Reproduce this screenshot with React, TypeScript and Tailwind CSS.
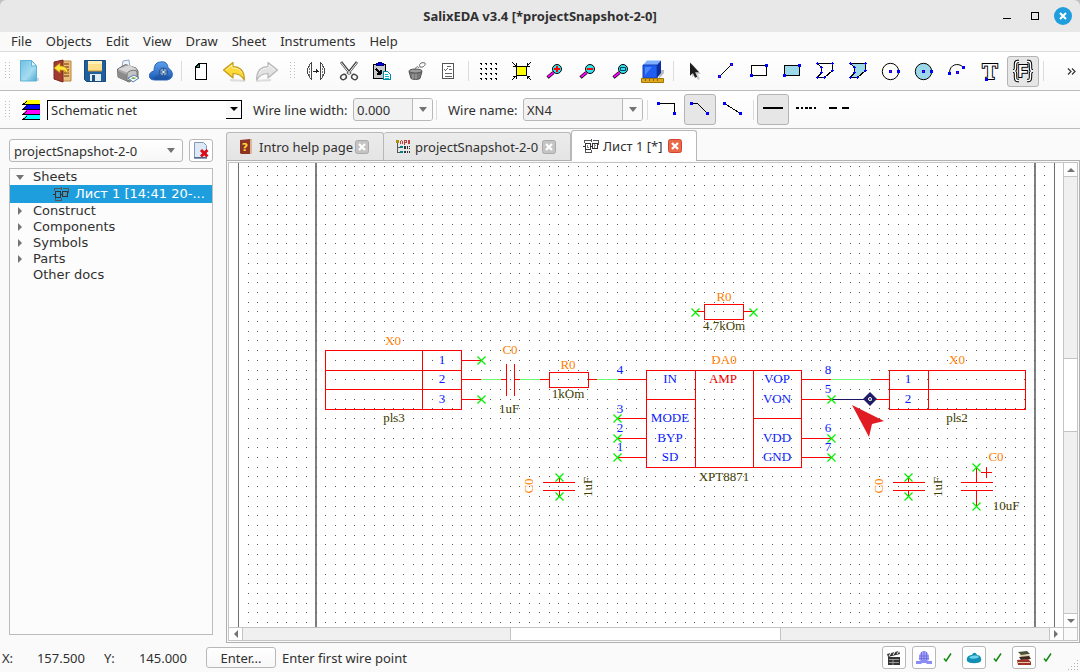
import { useState, type ReactNode } from "react";

const MENU = ["File", "Objects", "Edit", "View", "Draw", "Sheet", "Instruments", "Help"];

const RED = "#ff0000";
const GREEN = "#00f000";
const WIRE = "#6cff6c";
const ORANGE = "#ff8000";
const BLUE = "#0a1cff";
const OLIVE = "#404000";

/* ---------- icon helpers ---------- */

function Icon({ children, crisp }: { children: ReactNode; crisp?: boolean }) {
  return (
    <svg width="24" height="25" viewBox="0 0 24 25" fill="none" shapeRendering={crisp ? "crispEdges" : "auto"} aria-hidden="true">
      {children}
    </svg>
  );
}

function Node({ x, y, red }: { x: number; y: number; red?: boolean }) {
  return (
    <g>
      <rect x={x - 1.5} y={y - 1.5} width="3" height="3" fill="#0000ff" />
      {red && <rect x={x - 0.5} y={y - 0.5} width="1" height="1" fill="#ff0000" />}
    </g>
  );
}

/* ---------- file icons ---------- */

const NewIcon = () => (
  <Icon>
    <defs>
      <linearGradient id="new" x1="0" y1="0" x2="1" y2="1">
        <stop offset="0" stopColor="#6fc0e2" />
        <stop offset="0.6" stopColor="#a5dcf0" />
        <stop offset="1" stopColor="#4fa9d2" />
      </linearGradient>
    </defs>
    <path d="M8 22h14v-3l-4-1z" fill="#bbb" opacity="0.6" />
    <path d="M3.500 1.500h11l5 5.500v15h-16z" fill="url(#new)" stroke="#5fb3d8" />
    <path d="M14.500 1.500v5.500h5z" fill="#e4f6fc" stroke="#5fb3d8" />
  </Icon>
);

const ExitIcon = () => (
  <Icon>
    <path d="M9 2h12v20H9z" fill="#e8c07a" stroke="#b98440" />
    <path d="M14 5h5M14 8h5M14 11h5M14 14h5M14 17h5" stroke="#9b5a2b" strokeWidth="1.500" />
    <path d="M4 3l9-2v22l-9-3z" fill="#a33a30" stroke="#7b2a22" />
    <path d="M4 9l6-5v3c5 0 8 2 8 8-2-3-4-4-8-4v3z" fill="#ffe43c" stroke="#b58a10" strokeWidth="0.800" />
  </Icon>
);

const SaveIcon = () => (
  <Icon>
    <path d="M1.500 1.500h21v21h-19l-2-2z" fill="#1f5f9e" stroke="#174a7c" />
    <path d="M5 2h14v10H5z" fill="#ffe08a" />
    <path d="M5 2h14v3H5z" fill="#fff1b8" />
    <path d="M5 12h14" stroke="#c98b2a" />
    <path d="M7 15h11v7H7z" fill="#e4ecf2" />
    <path d="M9 16h3v6H9z" fill="#1f4f80" />
  </Icon>
);

const PrintIcon = () => (
  <Icon>
    <path d="M6 8l1-6 6-1 1 8z" fill="#eef4fb" stroke="#8fa9c8" />
    <path d="M1.500 10l8-4.500L20 9l2 3v6l-9 5-11-5z" fill="#a9a9a9" stroke="#6b6b6b" />
    <path d="M2 10l10 4 9-4-8-4z" fill="#d6d6d6" />
    <path d="M2 12l9 4v6l-9-4z" fill="#8b8b8b" />
    <path d="M11 15c1-4 9-5 10-2v6l-10 3z" fill="#c4c4c4" stroke="#777" />
    <path d="M12 19l6-3 5 3-6 4z" fill="#f2f6ff" stroke="#5c7fae" />
    <path d="M15 20l2-2 3 2z" fill="#58b947" />
    <path d="M17 18l2 0 1 1z" fill="#f0b030" />
  </Icon>
);

const CloudIcon = () => (
  <Icon>
    <defs>
      <linearGradient id="cloud" x1="0" y1="0" x2="0" y2="1">
        <stop offset="0" stopColor="#5da0ee" />
        <stop offset="1" stopColor="#1a59b4" />
      </linearGradient>
    </defs>
    <path d="M6 21c-8 0-7-8-1-9 0-7 3-9 7-9 4-1 7 2 7 6 6 3 6 11-1 12z" fill="url(#cloud)" stroke="#2b65b8" />
    <path d="M4 19l8-5 9 4-3 3H6z" fill="#1b4b94" opacity="0.500" />
    <circle cx="14.500" cy="13" r="4" fill="#7f9fc6" stroke="#2a5798" strokeWidth="1.200" />
    <path d="M14.500 9v8M10.500 13h8" stroke="#2a5798" />
    <circle cx="14.500" cy="13" r="1.200" fill="#dfe9f5" />
  </Icon>
);

const PageIcon = () => (
  <Icon crisp>
    <path d="M9.500 4.500h8v16h-11v-13z" fill="#fff" stroke="#000" />
    <path d="M10 5v3H7z" fill="#00a090" stroke="#000" />
  </Icon>
);

const UndoArrow = ({ fill, stroke }: { fill: string; stroke: string }) => (
  <>
    <path d="M8 21c6 1 12 0 15 1" stroke="#ddd" strokeWidth="2" />
    <path d="M1.500 11L11 3.500v4.200c8 .3 11.500 5 11.300 13.300C19.500 16 16.500 14.500 11 14.500V19z" fill={fill} stroke={stroke} strokeWidth="1.200" strokeLinejoin="round" />
    <path d="M4 11l6-5v3c5 0 8 1 10 5" stroke="#fff" opacity="0.600" />
  </>
);

const UndoIcon = () => <Icon><UndoArrow fill="#ffd935" stroke="#c29a16" /></Icon>;
const RedoIcon = () => (
  <Icon>
    <g transform="matrix(-1 0 0 1 24 0)">
      <UndoArrow fill="#e2e2e2" stroke="#b5b5b5" />
    </g>
  </Icon>
);

/* ---------- edit icons ---------- */

const MirrorIcon = () => (
  <Icon crisp>
    <path d="M7.500 3.500v17c-3-3-4-5-4-8.500s1-5.500 4-8.500zM16.500 3.500v17c3-3 4-5 4-8.500s-1-5.500-4-8.500z" stroke="#444" />
    <path d="M5.500 6v13M18.500 6v13" stroke="#777" strokeDasharray="2 1" />
    <path d="M9 12h6M12.500 10v4M13.500 11v2" stroke="#222" />
  </Icon>
);

const CutIcon = () => (
  <Icon>
    <path d="M4 3l9.500 12M20 3l-9.500 12" stroke="#444" strokeWidth="2.800" />
    <path d="M4 3.500l9.500 12M20 3.500l-9.500 12" stroke="#f4f4f4" strokeWidth="1" />
    <ellipse cx="6.500" cy="18" rx="3" ry="2.500" transform="rotate(-35 6.500 18)" stroke="#444" strokeWidth="1.400" />
    <ellipse cx="17.500" cy="18" rx="3" ry="2.500" transform="rotate(35 17.500 18)" stroke="#444" strokeWidth="1.400" />
  </Icon>
);

const PasteIcon = () => (
  <Icon crisp>
    <path d="M3.500 5.500h12v14h-12z" fill="#c9c9c9" stroke="#000" />
    <path d="M6.500 6.500v-2h2v-1h3v1h2v2z" fill="#0000e0" stroke="#000080" />
    <path d="M6 10l4 4M10.500 10.500v4M7 14.500h4" stroke="#000" strokeWidth="2" />
    <path d="M13.500 12.500h4l3 3v5h-7z" fill="#fff" stroke="#008c9c" />
    <path d="M15 15.500h3M15 17.500h4M15 19.500h4" stroke="#00b8d0" />
  </Icon>
);

const BucketIcon = () => (
  <Icon>
    <path d="M6 12.500h13l-2 7c-2 1.300-7 1.300-9 0z" fill="#777" stroke="#555" />
    <ellipse cx="12.500" cy="12" rx="6.500" ry="2" fill="#9d9d9d" stroke="#555" />
    <path d="M12 11c1-4 3-4 4-2M17 8c-2-4 3-5 5-4 1 2-2 5-5 4z" stroke="#666" />
    <path d="M10 15v5M13 15v5" stroke="#aaa" />
  </Icon>
);

const ChecklistIcon = () => (
  <Icon crisp>
    <path d="M6.500 4.500h11v15h-11z" fill="#fff" stroke="#555" />
    <path d="M11 7.500h4M13 10.500h3M9 14.500h7M9 17.500h7M8 10.500h1M9 11.500h1M10 10.500h1M11 9.500h1" stroke="#666" />
  </Icon>
);

/* ---------- view icons ---------- */

const GridIcon = () => (
  <Icon crisp>
    {[4, 9, 14, 19].flatMap((y) =>
      [4, 9, 14, 19].map((x) => <path key={`${x}-${y}`} d={`M${x} ${y}h2v2h-1v-1h-1z`} fill="#000" />)
    )}
  </Icon>
);

const FitIcon = () => (
  <Icon crisp>
    <path d="M7.500 7.500h10v9h-10z" fill="#ffff00" stroke="#000" />
    <path d="M3 3l4 4M22 3l-4 4M3 21l4-4M22 21l-4-4M7 4v3H4M18 4v3h3M7 20v-3H4M18 20v-3h3" stroke="#000" />
  </Icon>
);

function ZoomIcon({ kind }: { kind: "in" | "out" | "fit" }) {
  return (
    <Icon>
      <path d="M11.500 13.500L5.500 18.500" stroke="#000" strokeWidth="3.400" />
      <path d="M11.500 13.500L6 18" stroke="#ff00ff" strokeWidth="2" />
      <circle cx="15" cy="10" r="4.500" fill="#2fe4ee" stroke="#000" />
      {kind === "fit" ? (
        <path d="M12.500 8.500h5v3h-5z" stroke="#004060" />
      ) : (
        <path d={kind === "in" ? "M12 10h6M15 7v6" : "M12 10h6"} stroke="#f00" strokeWidth="2" />
      )}
    </Icon>
  );
}

const CubeIcon = () => (
  <Icon>
    <path d="M18 20l5-6v-3h-4z" fill="#bbb" />
    <path d="M2 6l4-4.500h14l-3 4.500z" fill="#7fb0ff" />
    <path d="M2 6h14v13H2z" fill="#1f5cf0" stroke="#153fb5" />
    <path d="M16 6l4-4.500V14l-4 5z" fill="#0b2f9e" />
    <path d="M4 8h7l-7 8z" fill="#5f96ff" opacity="0.700" />
    <path d="M.500 19.500h22v4H.500z" fill="#e0a91c" stroke="#a3760a" />
    <path d="M4.500 20v2M8.500 20v2M12.500 20v2M16.500 20v2" stroke="#8a6200" />
  </Icon>
);

/* ---------- draw icons ---------- */

const PointerIcon = () => (
  <Icon>
    <path d="M11 5v13l3-2 3 5 2-1-2.500-5H20z" fill="#999" opacity="0.500" />
    <path d="M9 3.500v13.200l2.900-2.600 2.100 4.700 2.200-1-2.100-4.500h4z" fill="#1c1c1c" />
  </Icon>
);

const LineIcon = () => (
  <Icon crisp>
    <path d="M5.500 17.500l12-12" stroke="#000" />
    <Node x={5.5} y={17.5} red />
    <Node x={17.5} y={5.5} red />
  </Icon>
);

const RectIcon = ({ filled }: { filled?: boolean }) => (
  <Icon crisp>
    <path d="M4.500 6.500h15v10h-15z" fill={filled ? "#9bd9ea" : "#fff"} stroke="#000" />
    <Node x={19.5} y={6.5} />
    <Node x={4.5} y={16.5} />
  </Icon>
);

const POLY = [[4.5, 4.5], [19.5, 4.5], [19.5, 11.5], [11.5, 18.5], [4.5, 18.5], [8.5, 13.5], [8.5, 8.5]];

const PolyIcon = ({ filled }: { filled?: boolean }) => (
  <Icon crisp>
    <polygon points={POLY.join(" ")} fill={filled ? "#9bd9ea" : "#fff"} stroke="#000" />
    {POLY.map(([x, y]) => (
      <path key={`${x}-${y}`} d={`M${x - 1.5} ${y}h3M${x} ${y - 1.5}v3`} stroke="#0000ff" />
    ))}
  </Icon>
);

const CircleIcon = ({ filled }: { filled?: boolean }) => (
  <Icon>
    <circle cx="11.500" cy="12.500" r="8.200" fill={filled ? "#9bd9ea" : "#fff"} stroke="#000" />
    <Node x={11.5} y={12.5} red />
    <Node x={19.5} y={12.5} />
  </Icon>
);

const ArcIcon = () => (
  <Icon>
    <path d="M4.500 14c0-9 9-10.500 13.500-6" stroke="#000" />
    <Node x={4.5} y={14.5} />
    <Node x={12.5} y={13.5} red />
    <Node x={18.5} y={8.5} />
  </Icon>
);

const TextIcon = () => (
  <Icon>
    <text x="12" y="20" textAnchor="middle" fontFamily="DejaVu Serif" fontWeight="700" fontSize="20" fill="#fff" stroke="#000" strokeWidth="2" paintOrder="stroke">T</text>
    <Node x={8.5} y={20.5} />
  </Icon>
);

const BRACES = "M8 2.500H6.500C4.500 2.500 4.500 4 4.500 6v3c0 2-1 3-2.500 3 1.500 0 2.500 1 2.500 3v3c0 2 0 3.500 2 3.500H8M16 2.500h1.500c2 0 2 1.500 2 3.500v3c0 2 1 3 2.500 3-1.500 0-2.500 1-2.500 3v3c0 2 0 3.500-2 3.500H16";

const FieldIcon = () => (
  <Icon>
    <path d={BRACES} stroke="#000" strokeWidth="3.400" />
    <path d={BRACES} stroke="#fff" strokeWidth="1.400" />
    <text x="12" y="18" textAnchor="middle" fontFamily="Liberation Sans" fontWeight="700" fontSize="16" fill="#fff" stroke="#000" strokeWidth="2" paintOrder="stroke">F</text>
  </Icon>
);

/* ---------- wire icons ---------- */

const WireIcon = ({ d }: { d: string }) => (
  <Icon crisp>
    <path d={d} stroke="#000" />
    <Node x={3.5} y={6.5} />
    <Node x={19.5} y={16.5} />
  </Icon>
);

const StrokeIcon = ({ d }: { d: string }) => (
  <Icon crisp>
    <path d={d} stroke="#000" strokeWidth="2" />
  </Icon>
);

const LayersIcon = () => (
  <svg width="18" height="20" viewBox="0 0 18 20" shapeRendering="crispEdges" aria-hidden="true">
    {["#ffff00", "#0000ff", "#ff00ff", "#00ffff"].map((fill, i) => (
      <g key={fill} transform={`translate(0 ${i * 5})`}>
        <path d="M4 0h14v4H0z" fill={fill} />
        <path d="M0 4.500h18M1 3.500h2M3 2.500h1M4 1.500h1" stroke="#000" />
      </g>
    ))}
  </svg>
);

const SchemeIcon = () => (
  <svg width="16" height="14" viewBox="0 0 16 14" fill="none" stroke="#333" shapeRendering="crispEdges" aria-hidden="true">
    <path d="M2.500 4.500h5v6h-5zM9.500 4.500h5v5h-5zM0 7.500h2M8 7.500h1" />
    <path d="M1.500 4V1.500h7M8.500 0v3M9.500 1.500h6V6M2.500 11v2h6v-2" stroke="#555" />
    <path d="M4.500 6v3M5.500 8v1M11.500 5v4M12.500 6v1" stroke="#888" />
  </svg>
);

const ProjectIcon = () => (
  <svg width="15" height="15" viewBox="0 0 15 15" fill="none" shapeRendering="crispEdges" aria-hidden="true">
    <path d="M2.500 3v10.500h3M2.500 8.500h3" stroke="#555" />
    <path d="M1 1h3v3H1z" fill="#a89000" />
    <path d="M5 7h3v2H5zM5 12h3v2H5z" fill="#008080" />
    <path d="M5.500 5V2M6 1.500h1M7.500 2v3M9.500 6V1.500h2v2h-2M13.500 1.500h1v3h-1z" stroke="#c04040" />
    <path d="M9.500 7.500h1v2h-1zM12.500 7v3M14.500 7v1M14.500 9v1M9.500 14v-2h1v2M12.500 14v-2M14.500 12v2" stroke="#333" />
  </svg>
);

const HelpBookIcon = () => (
  <svg width="13" height="16" viewBox="0 0 13 16" aria-hidden="true">
    <path d="M1 1l10-1 2 1v14H2l-1-1z" fill="#8d3424" />
    <path d="M11 0l2 1v14h-2z" fill="#d9b89c" />
    <text x="6" y="12" textAnchor="middle" fontFamily="DejaVu Sans" fontWeight="700" fontSize="11" fill="#ffd93b">?</text>
  </svg>
);

const DeleteDocIcon = () => (
  <svg width="17" height="17" viewBox="0 0 17 17" aria-hidden="true">
    <path d="M1.500.500h9l3 3v12h-12z" fill="#dde9f7" stroke="#8099bb" />
    <path d="M1 16h13" stroke="#1c3a63" />
    <path d="M8 8l6.500 6.500M14.500 8L8 14.500" stroke="#d80f1a" strokeWidth="3" />
  </svg>
);

/* ---------- controls ---------- */

function ToolButton({ label, active, children }: { label: string; active?: boolean; children: ReactNode }) {
  return (
    <button
      type="button"
      aria-label={label}
      aria-pressed={active}
      className={`mr-px flex h-[31px] w-8 shrink-0 items-center justify-center rounded-[3px] border ${
        active ? "border-[#b4b4b4] bg-[#e6e6e6]" : "border-transparent"
      }`}
    >
      {children}
    </button>
  );
}

const Separator = () => (
  <div className="flex w-[7px] shrink-0 justify-center">
    <div className="h-5 w-px bg-[#dcdcdc]" />
  </div>
);

const Handle = () => (
  <svg width="5" height="18" className="shrink-0" shapeRendering="crispEdges" aria-hidden="true">
    <path d="M.5 0v18M4.500 0v18" stroke="#bdbdbd" strokeDasharray="1 2" />
  </svg>
);

const Triangle = () => (
  <svg width="8" height="5" viewBox="0 0 8 5" aria-hidden="true">
    <path d="M0 0h8L4 5z" fill="#747474" />
  </svg>
);

function EditCombo({ id, value, className }: { id: string; value: string; className: string }) {
  return (
    <div className={`flex h-[23px] shrink-0 overflow-hidden rounded-[3px] border border-[#b8b8b8] bg-[#f2f2f2] ${className}`}>
      <input id={id} defaultValue={value} className="min-w-0 flex-1 bg-transparent pl-[3px] outline-none" />
      <button type="button" aria-label="Show values" className="flex w-5 items-center justify-center border-l border-[#b8b8b8] bg-[#fafafa]">
        <Triangle />
      </button>
    </div>
  );
}

function MainToolbar() {
  return (
    <div className="flex h-[39px] items-center overflow-hidden border-b border-[#bcbcbc] bg-linear-to-b from-white to-[#f9f9f9] pl-[5px]">
      <Handle />
      <div className="ml-[3px] flex items-center">
        <ToolButton label="New"><NewIcon /></ToolButton>
        <ToolButton label="Close project"><ExitIcon /></ToolButton>
        <ToolButton label="Save"><SaveIcon /></ToolButton>
        <ToolButton label="Print"><PrintIcon /></ToolButton>
        <ToolButton label="Cloud"><CloudIcon /></ToolButton>
        <Separator />
        <ToolButton label="New sheet"><PageIcon /></ToolButton>
        <ToolButton label="Undo"><UndoIcon /></ToolButton>
        <ToolButton label="Redo"><RedoIcon /></ToolButton>
      </div>
      <div className="flex w-4 shrink-0 justify-center"><Handle /></div>
      <ToolButton label="Mirror"><MirrorIcon /></ToolButton>
      <ToolButton label="Cut"><CutIcon /></ToolButton>
      <ToolButton label="Paste"><PasteIcon /></ToolButton>
      <ToolButton label="Brush"><BucketIcon /></ToolButton>
      <ToolButton label="Properties"><ChecklistIcon /></ToolButton>
      <Separator />
      <ToolButton label="Grid"><GridIcon /></ToolButton>
      <ToolButton label="Fit page"><FitIcon /></ToolButton>
      <ToolButton label="Zoom in"><ZoomIcon kind="in" /></ToolButton>
      <ToolButton label="Zoom out"><ZoomIcon kind="out" /></ToolButton>
      <ToolButton label="Zoom window"><ZoomIcon kind="fit" /></ToolButton>
      <ToolButton label="3D view"><CubeIcon /></ToolButton>
      <Separator />
      <ToolButton label="Select"><PointerIcon /></ToolButton>
      <ToolButton label="Line"><LineIcon /></ToolButton>
      <ToolButton label="Rectangle"><RectIcon /></ToolButton>
      <ToolButton label="Filled rectangle"><RectIcon filled /></ToolButton>
      <ToolButton label="Region"><PolyIcon /></ToolButton>
      <ToolButton label="Filled region"><PolyIcon filled /></ToolButton>
      <ToolButton label="Circle"><CircleIcon /></ToolButton>
      <ToolButton label="Filled circle"><CircleIcon filled /></ToolButton>
      <ToolButton label="Arc"><ArcIcon /></ToolButton>
      <ToolButton label="Text"><TextIcon /></ToolButton>
      <ToolButton label="Field" active><FieldIcon /></ToolButton>
      <Separator />
      <button type="button" aria-label="More tools" className="ml-auto pr-1">
        <svg width="9" height="7" viewBox="0 0 9 7" fill="none" stroke="#333" strokeWidth="1.200" aria-hidden="true">
          <path d="M1 .500l3 3-3 3M5 .500l3 3-3 3" />
        </svg>
      </button>
    </div>
  );
}

function WireToolbar() {
  return (
    <div className="flex h-[38px] items-center overflow-hidden border-b border-[#bcbcbc] bg-linear-to-b from-white to-[#f9f9f9] pl-[5px]">
      <Handle />
      <div className="ml-3 w-[25px] shrink-0"><LayersIcon /></div>
      <div className="relative h-5 w-[195px] shrink-0 border-t border-l border-black bg-white">
        <select aria-label="Layer" className="h-full w-full appearance-none bg-transparent pl-[3px] outline-none">
          <option>Schematic net</option>
        </select>
        <span className="pointer-events-none absolute top-0 right-0 flex h-[18px] w-4 items-center justify-center border-r border-b border-black bg-[#fafafa]">
          <svg width="8" height="4" viewBox="0 0 8 4" aria-hidden="true"><path d="M0 0h8L4 4z" fill="#000" /></svg>
        </span>
      </div>
      <label htmlFor="wire-width" className="ml-[11px] w-[100px] shrink-0 whitespace-nowrap">Wire line width:</label>
      <EditCombo id="wire-width" value="0.000" className="w-20" />
      <Separator />
      <label htmlFor="wire-name" className="ml-2 w-[75px] shrink-0 whitespace-nowrap">Wire name:</label>
      <EditCombo id="wire-name" value="XN4" className="w-[120px]" />
      <div className="w-px shrink-0" />
      <Separator />
      <ToolButton label="Orthogonal wire"><WireIcon d="M3.500 6.500h16v10" /></ToolButton>
      <ToolButton label="Angled wire" active><WireIcon d="M3.500 6.500h6l10 10" /></ToolButton>
      <ToolButton label="Free wire"><WireIcon d="M3.500 6.500l16 10" /></ToolButton>
      <Separator />
      <ToolButton label="Solid" active><StrokeIcon d="M2 11h20" /></ToolButton>
      <ToolButton label="Dotted"><StrokeIcon d="M2 11h3M7 11h2M11 11h3M15 11h3M20 11h2" /></ToolButton>
      <ToolButton label="Dashed"><StrokeIcon d="M2 11h8M15 11h7" /></ToolButton>
    </div>
  );
}

function Sidebar() {
  return (
    <aside className="flex w-[226px] shrink-0 flex-col pt-[10px] pr-[13px] pb-2 pl-[9px]">
      <div className="mb-[6px] flex justify-between">
        <div className="relative h-[23px] w-[174px]">
          <select aria-label="Project" className="h-full w-full appearance-none rounded-[3px] border border-[#b8b8b8] bg-linear-to-b from-white to-[#f7f7f7] pl-1 outline-none">
            <option>projectSnapshot-2-0</option>
          </select>
          <span className="pointer-events-none absolute top-[9px] right-2"><Triangle /></span>
        </div>
        <button type="button" aria-label="Close project" className="flex h-[23px] w-6 items-center justify-center rounded-[3px] border border-[#b8b8b8] bg-white">
          <DeleteDocIcon />
        </button>
      </div>
      <ul className="flex-1 border border-[#bcbcbc] bg-[#fcfcfc] font-['DejaVu_Sans',sans-serif] text-[13px] leading-4">
        <li>
          <div className="flex h-4 items-center pl-[6px]"><span className="w-[17px]"><Triangle /></span>Sheets</div>
          <div className="flex h-[18px] items-center gap-[6px] bg-[#1f9ede] pl-[43px] whitespace-nowrap text-white">
            <SchemeIcon />Лист 1 [14:41 20-...
          </div>
        </li>
        {["Construct", "Components", "Symbols", "Parts", "Other docs"].map((name) => (
          <li key={name} className="flex h-4 items-center pl-2">
            <span className="w-[15px]">
              {name !== "Other docs" && (
                <svg width="4" height="8" viewBox="0 0 4 8" aria-hidden="true"><path d="M0 0v8l4-4z" fill="#747474" /></svg>
              )}
            </span>
            {name}
          </li>
        ))}
      </ul>
    </aside>
  );
}

const CloseBox = ({ active }: { active?: boolean }) => (
  <svg width="14" height="14" viewBox="0 0 14 14" aria-hidden="true">
    <rect x="0.500" y="0.500" width="13" height="13" rx="2" fill={active ? "#e9694b" : "#c4c4c4"} stroke={active ? "#d2452a" : "#a9a9a9"} />
    <path d="M4 4l6 6M10 4l-6 6" stroke="#fff" strokeWidth="2.200" />
  </svg>
);

const TABS = [
  { title: "Intro help page", icon: <HelpBookIcon />, width: "w-[158px]" },
  { title: "projectSnapshot-2-0", icon: <ProjectIcon />, width: "w-[187px]" },
  { title: "Лист 1 [*]", icon: <SchemeIcon />, width: "w-[126px]" },
];

function Tabs() {
  const [current, setCurrent] = useState(2);
  return (
    <div role="tablist" className="flex h-[31px] items-end">
      {TABS.map((tab, i) => (
        <div
          key={tab.title}
          className={`flex items-center rounded-t-[3px] border-t border-r border-[#b8b8b8] ${tab.width} ${
            i === 0 ? "border-l pl-3" : "pl-[11px]"
          } ${i === current ? "relative -mb-px h-[31px] border-l bg-white" : "h-7 bg-linear-to-b from-[#ececec] to-[#e4e4e4]"}`}
        >
          <button type="button" role="tab" aria-selected={i === current} onClick={() => setCurrent(i)} className="flex min-w-0 flex-1 items-center gap-1 whitespace-nowrap">
            <span className="w-4 shrink-0">{tab.icon}</span>
            {tab.title}
          </button>
          <button type="button" aria-label={`Close ${tab.title}`} className="mr-[14px]"><CloseBox active={i === current} /></button>
        </div>
      ))}
    </div>
  );
}

/* ---------- schematic ---------- */

function gridPath() {
  let d = "";
  for (let row = 0; row < 48; row++) {
    for (let col = 0; col < 83; col++) {
      d += `M${Math.floor(248.1 + col * 9.71)} ${Math.floor(166.2 + row * 9.71)}h1v1h-1z`;
    }
  }
  return d;
}

const GRID = gridPath();

const CROSSES = [
  [481, 360], [481, 399], [695, 312], [753, 312], [617, 418], [617, 438], [617, 457],
  [831, 399], [831, 438], [831, 457], [559, 477], [559, 496], [908, 477], [908, 496], [976, 467], [976, 506],
];

// text, centre x, baseline y, colour
const LABELS: [string, number, number, string][] = [
  ["X0", 393, 345, ORANGE], ["pls3", 394, 422, OLIVE],
  ["1", 442, 364, BLUE], ["2", 442, 383, BLUE], ["3", 442, 403, BLUE],
  ["C0", 510, 354, ORANGE], ["1uF", 509, 413, OLIVE],
  ["R0", 568, 369, ORANGE], ["1kOm", 568, 398, OLIVE],
  ["R0", 724, 301, ORANGE], ["4.7kOm", 724, 330, OLIVE],
  ["DA0", 724, 364, ORANGE], ["XPT8871", 724, 481, OLIVE], ["AMP", 723, 383, "#f00000"],
  ["IN", 670, 383, BLUE], ["MODE", 670, 422, BLUE], ["BYP", 670, 442, BLUE], ["SD", 670, 461, BLUE],
  ["VOP", 777, 383, BLUE], ["VON", 777, 403, BLUE], ["VDD", 777, 442, BLUE], ["GND", 777, 461, BLUE],
  ["4", 620, 374, BLUE], ["3", 620, 413, BLUE], ["2", 620, 432, BLUE], ["1", 620, 451, BLUE],
  ["8", 828, 374, BLUE], ["5", 828, 393, BLUE], ["6", 828, 432, BLUE], ["7", 828, 451, BLUE],
  ["X0", 957, 364, ORANGE], ["pls2", 957, 422, OLIVE], ["1", 908, 383, BLUE], ["2", 908, 403, BLUE],
  ["C0", 996, 461, ORANGE], ["10uF", 1006, 510, OLIVE],
];

const VERTICAL_LABELS: [string, number, number, string][] = [
  ["C0", 533, 486, ORANGE], ["1uF", 592, 487, OLIVE],
  ["C0", 883, 486, ORANGE], ["1uF", 942, 487, OLIVE],
];

function Schematic() {
  return (
    <svg className="block h-full w-full" aria-label="Schematic sheet">
      <g transform="translate(-229 -163)" fill="none">
        <g shapeRendering="crispEdges">
          <path d="M238.500 163v480M1054.500 163v480" stroke="#6e6e6e" />
          <path d="M316 163v480M1035 163v480" stroke="#808080" strokeWidth="2" />
          <path d={GRID} fill="#5c5c5c" />
          <path d="M481 379.500h20M520 379.500h20M597 379.500h21M831 379.500h40" stroke={WIRE} />
          <g stroke={RED}>
            <path d="M325.500 350.500h136v59h-136zM325.500 370.500h136M325.500 389.500h136M422.500 350v59" />
            <path d="M461 360.500h20M461 379.500h20M461 399.500h20" />
            <path d="M501 379.500h5M506.500 364v32M514.500 364v32M514 379.500h6" />
            <path d="M540 379.500h9M549.500 372.500h39v15h-39zM588 379.500h9" />
            <path d="M695 311.500h9M704.500 304.500h39v15h-39zM743 311.500h10" />
            <path d="M646.500 370.500h155v97h-155zM695.500 370v97M753.500 370v97M646 399.500h49M753 418.500h48" />
            <path d="M618 379.500h28M618 418.500h28M618 438.500h28M618 457.500h28" />
            <path d="M801 379.500h30M801 399.500h30M801 438.500h30M801 457.500h30" />
            <path d="M871 379.500h18M876 399.500h13M889.500 370.500h136v39h-136zM889.500 389.500h136M928.500 370v39" />
            <path d="M543 482.500h32M543 490.500h32M559.500 478v4M559.500 491v5" />
            <path d="M893 482.500h32M893 490.500h32M908.500 478v4M908.500 491v5" />
            <path d="M961 482.500h32M961 490.500h32M976.500 468v14M976.500 491v15M986.500 467v11M981 472.500h11" />
          </g>
          <path d="M832 399.500h33" stroke="#1c1560" />
        </g>
        {CROSSES.map(([x, y]) => (
          <path key={`${x}-${y}`} d={`M${x - 3.5} ${y - 3.5}l8 8M${x + 4.5} ${y - 3.5}l-8 8`} stroke={GREEN} strokeWidth="1.200" />
        ))}
        <path d="M870 392l7 7-7 7-7-7z" fill="#211a66" />
        <circle cx="870" cy="399" r="1.500" fill="#211a66" stroke="#fff" />
        <path d="M871 400h1v1h-1z" fill={GREEN} />
        <path d="M852 405l32 16-12 3-3 13z" fill="#e01b24" />
        <g fontFamily="'Liberation Serif', serif" fontSize="13" textAnchor="middle">
          {LABELS.map(([text, x, y, fill]) => (
            <text key={`${text}-${x}-${y}`} x={x} y={y} fill={fill}>{text}</text>
          ))}
          {VERTICAL_LABELS.map(([text, x, y, fill]) => (
            <text key={`${text}-${x}`} transform={`translate(${x} ${y}) rotate(-90)`} fill={fill}>{text}</text>
          ))}
        </g>
      </g>
    </svg>
  );
}

function Arrow({ d, label, className }: { d: string; label: string; className: string }) {
  return (
    <button type="button" aria-label={label} className={`flex shrink-0 items-center justify-center border-[#c4c4c4] bg-white ${className}`}>
      <svg width="8" height="8" viewBox="0 0 8 8" aria-hidden="true"><path d={d} fill="#747474" /></svg>
    </button>
  );
}

function Canvas() {
  return (
    <div className="flex min-h-0 flex-1 flex-col border border-[#b0b0b0] p-px">
      <div className="grid min-h-0 flex-1 grid-cols-[1fr_14px] grid-rows-[minmax(0,1fr)_13px] border border-[#c4c4c4] bg-white">
        <div className="min-h-0 overflow-hidden"><Schematic /></div>
        <div className="flex flex-col border-l border-[#c4c4c4] bg-[#f0f0f0]">
          <Arrow label="Up" d="M0 6h8L4 2z" className="h-[14px] border-b" />
          <div className="flex-[182]" />
          <div className="flex-[73] border-y border-[#c4c4c4] bg-white" />
          <div className="flex-[182]" />
          <Arrow label="Down" d="M0 2h8L4 6z" className="h-[14px] border-t" />
        </div>
        <div className="flex border-t border-[#c4c4c4] bg-[#f0f0f0]">
          <Arrow label="Left" d="M6 0v8L2 4z" className="w-[14px] border-r" />
          <div className="flex-[268]" />
          <div className="flex-[269] border-x border-[#c4c4c4] bg-white" />
          <div className="flex-[269]" />
          <Arrow label="Right" d="M2 0v8l4-4z" className="w-[14px] border-l" />
        </div>
        <div className="border-t border-l border-[#c4c4c4] bg-[#fafafa]" />
      </div>
    </div>
  );
}

/* ---------- status bar ---------- */

const Check = () => (
  <svg width="9" height="9" viewBox="0 0 9 9" className="mr-[10px] ml-[7px]" fill="none" aria-hidden="true">
    <path d="M1 5.500l2 2.500 5-7.500" stroke="#128a12" strokeWidth="1.500" />
  </svg>
);

function StatusButton({ label, children }: { label: string; children: ReactNode }) {
  return (
    <button type="button" aria-label={label} className="flex h-[23px] w-6 items-center justify-center rounded-[3px] border border-[#b8b8b8] bg-white">
      <svg width="16" height="16" viewBox="0 0 16 16" fill="none" aria-hidden="true">{children}</svg>
    </button>
  );
}

function StatusBar() {
  return (
    <footer className="flex h-[29px] shrink-0 items-center pl-[2px] whitespace-nowrap">
      <span className="w-7">X:</span>
      <span className="w-[55px] text-right">157.500</span>
      <span className="ml-[19px] w-6">Y:</span>
      <span className="w-[59px] text-right">145.000</span>
      <button type="button" className="ml-[19px] h-[21px] w-[70px] rounded-[3px] border border-[#b8b8b8] bg-linear-to-b from-white to-[#f7f7f7] leading-4">Enter...</button>
      <span className="ml-[6px]">Enter first wire point</span>
      <div className="ml-auto flex items-center">
        <StatusButton label="Video">
          <path d="M2 7h12v8H2z" fill="#333" />
          <path d="M1 4l12-3 1 3-12 3z" fill="#333" />
          <path d="M3 6l2-3M7 5l2-3M11 4l2-3" stroke="#fff" />
          <path d="M3 9.500h10M3 12.500h10M7 9v6" stroke="#999" />
        </StatusButton>
        <div className="w-[6px]" />
        <StatusButton label="Server">
          <path d="M3 10c-1-12 11-12 10 0z" fill="#a4a4fa" />
          <path d="M3 6h10M3 8.500h10M8 1v9M5.500 2v8M10.500 2v8" stroke="#6060d8" strokeWidth="0.700" />
          <path d="M0 11h3l2-1h6l2 1h3v3h-5l-1-1H6l-1 1H0z" fill="#8c8cf6" />
        </StatusButton>
        <Check />
        <StatusButton label="Cloud library">
          <path d="M1 11c-1-4 2-6 5-6 1-3 4-3 5 0 3 0 5 3 4 6-2 3-12 3-14 0z" fill="#118fb4" />
          <path d="M3 8c2-3 8-3 10-1-2 2-7 2-10 1z" fill="#6cd6ec" />
        </StatusButton>
        <Check />
        <StatusButton label="Local library">
          <path d="M2 2l9-1 3 3-9 1z" fill="#4a5038" />
          <path d="M3 5h11v2H5z" fill="#e5d2a5" />
          <path d="M3 7l10-1 2 3-10 1z" fill="#3a2820" />
          <path d="M1 10l11-1 3 3v3H2z" fill="#9d3328" />
          <path d="M2 12.500h12" stroke="#e8c7a8" />
        </StatusButton>
        <Check />
      </div>
      <svg width="12" height="12" viewBox="0 0 12 12" className="ml-[6px] self-end" shapeRendering="crispEdges" aria-hidden="true">
        <path d="M9 0h1v1h-1zM6 3h1v1h-1zM9 3h1v1h-1zM3 6h1v1h-1zM6 6h1v1h-1zM9 6h1v1h-1zM0 9h1v1h-1zM3 9h1v1h-1zM6 9h1v1h-1zM9 9h1v1h-1z" fill="#b0b0b0" />
      </svg>
    </footer>
  );
}

export default function App() {
  return (
    <div className="flex h-screen flex-col overflow-hidden bg-[#fafafa] font-['Noto_Sans','Open_Sans',sans-serif] text-[13px] leading-4 text-[#303030]">
      <div className="shrink-0 bg-[#c0c0c0]">
        <header className="relative flex h-8 items-center justify-center rounded-t-md bg-[#e8e8e8]">
          <h1 className="font-bold">SalixEDA v3.4 [*projectSnapshot-2-0]</h1>
          <div className="absolute inset-y-0 right-2 flex items-center">
            <button type="button" aria-label="Minimize" className="mr-5 flex h-[5px] w-2 items-end"><span className="h-px w-full bg-black" /></button>
            <button type="button" aria-label="Maximize" className="mr-[15px] size-2 border border-black" />
            <button type="button" aria-label="Close" className="flex size-[18px] items-center justify-center rounded-full bg-[#1f9ede]">
              <svg width="8" height="8" viewBox="0 0 8 8" aria-hidden="true"><path d="M1 1l6 6M7 1L1 7" stroke="#fff" strokeWidth="2" /></svg>
            </button>
          </div>
        </header>
      </div>
      <nav className="flex h-5 shrink-0 items-center gap-[14px] border-b border-[#dcdcdc] pb-0.5 pl-[11px]">
        {MENU.map((item) => (
          <button type="button" key={item}>{item}</button>
        ))}
      </nav>
      <MainToolbar />
      <WireToolbar />
      <main className="flex min-h-0 flex-1">
        <Sidebar />
        <section className="flex min-w-0 flex-1 flex-col">
          <Tabs />
          <Canvas />
        </section>
      </main>
      <StatusBar />
    </div>
  );
}
